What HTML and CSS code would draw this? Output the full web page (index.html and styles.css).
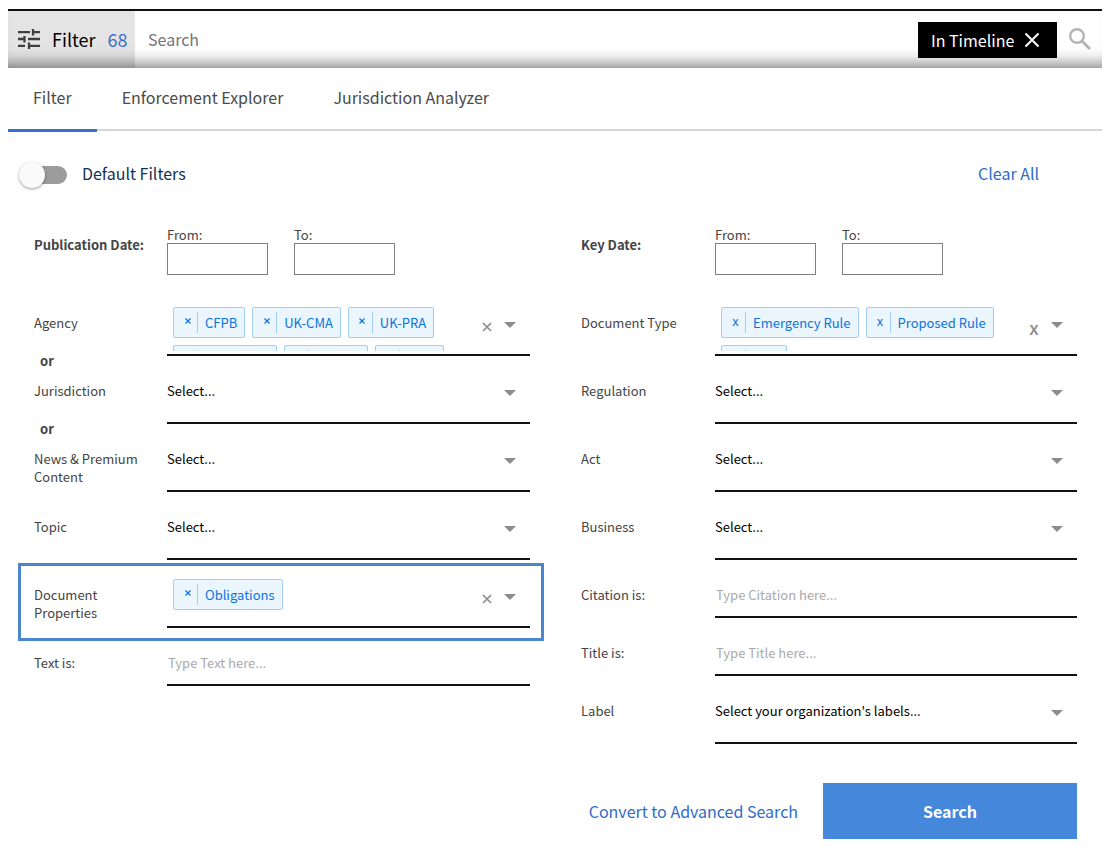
FILE: index.html
```html
<!DOCTYPE html>
<html lang="en">
<head>
<meta charset="utf-8">
<meta name="viewport" content="width=device-width, initial-scale=1">
<title>Filter</title>
<link rel="stylesheet" href="styles.css">
</head>
<body>
<svg class="defs" aria-hidden="true">
  <symbol id="arrow" viewBox="0 0 12 6"><path d="M0 0h12L6 6z" fill="currentColor"/></symbol>
  <symbol id="cross" viewBox="0 0 10 10"><path d="M1 1l8 8M9 1L1 9" fill="none" stroke="currentColor" stroke-width="1.700"/></symbol>
  <symbol id="small-cross" viewBox="0 0 6 6"><path d="M.5 .5l5 5M5.500 .5l-5 5" fill="none" stroke="currentColor" stroke-width="1.200"/></symbol>
</svg>
<header class="topbar">
  <button class="filter-toggle" type="button">
    <svg class="tune" viewBox="0 0 22 20" aria-hidden="true"><path d="M0 3.200h12M15 3.200h7M15 0v6.500M0 10h7M6.500 7v6.500M10 10h12M0 16.800h7M11 16.800h11M11 13.500V20" fill="none" stroke="#3f3f3f" stroke-width="2.300"/></svg>
    <span>Filter</span><span class="count">68</span>
  </button>
  <input class="search-input" type="search" placeholder="Search" aria-label="Search">
  <button class="scope" type="button">In Timeline
    <svg class="scope-x" viewBox="0 0 16 16" aria-hidden="true"><path d="M1.500 1.500l13 13M14.500 1.500l-13 13" fill="none" stroke="#fff" stroke-width="2"/></svg>
  </button>
  <button class="magnifier" type="button" aria-label="Run search">
    <svg viewBox="0 0 22 22" aria-hidden="true"><circle cx="8" cy="8" r="6.800" fill="none" stroke="#b5b5b5" stroke-width="2.400"/><path d="M13 13l8 8" stroke="#b5b5b5" stroke-width="3"/></svg>
  </button>
</header>
<nav class="tabs">
  <a class="tab active" href="#filter">Filter</a>
  <a class="tab" href="#enforcement">Enforcement Explorer</a>
  <a class="tab" href="#jurisdiction">Jurisdiction Analyzer</a>
</nav>
<main class="panel">
  <div class="tools">
    <label class="switch"><input type="checkbox"><span class="track"></span>Default Filters</label>
    <button class="link" type="button">Clear All</button>
  </div>
  <form class="columns">
    <div class="column">
      <div class="dates" role="group" aria-labelledby="publication">
        <span class="date-title" id="publication">Publication Date:</span>
        <label class="date">From:<input type="text"></label>
        <label class="date">To:<input type="text"></label>
      </div>
      <div class="row">
        <span class="name">Agency</span>
        <div class="control multi">
          <div class="chips">
            <span class="chip"><button type="button" aria-label="Remove CFPB"><svg><use href="#small-cross"/></svg></button><span>CFPB</span></span>
            <span class="chip"><button type="button" aria-label="Remove UK-CMA"><svg><use href="#small-cross"/></svg></button><span>UK-CMA</span></span>
            <span class="chip"><button type="button" aria-label="Remove UK-PRA"><svg><use href="#small-cross"/></svg></button><span>UK-PRA</span></span>
            <span class="chip wide"><i></i></span>
            <span class="chip mid"><i></i></span>
            <span class="chip narrow"><i></i></span>
          </div>
          <button class="clear" type="button" aria-label="Clear agency"><svg><use href="#cross"/></svg></button>
          <button class="open" type="button" aria-label="Open agency"><svg><use href="#arrow"/></svg></button>
        </div>
      </div>
      <div class="row">
        <div class="name either"><b>or</b><label for="jurisdiction">Jurisdiction</label></div>
        <div class="control pick"><select id="jurisdiction"><option>Select...</option></select><svg><use href="#arrow"/></svg></div>
      </div>
      <div class="row">
        <div class="name either"><b>or</b><label for="news">News &amp; Premium Content</label></div>
        <div class="control pick"><select id="news"><option>Select...</option></select><svg><use href="#arrow"/></svg></div>
      </div>
      <div class="row">
        <label class="name" for="topic">Topic</label>
        <div class="control pick"><select id="topic"><option>Select...</option></select><svg><use href="#arrow"/></svg></div>
      </div>
      <div class="row marked">
        <span class="name">Document<br>Properties</span>
        <div class="control multi">
          <div class="chips">
            <span class="chip"><button type="button" aria-label="Remove Obligations"><svg><use href="#small-cross"/></svg></button><span>Obligations</span></span>
          </div>
          <button class="clear" type="button" aria-label="Clear document properties"><svg><use href="#cross"/></svg></button>
          <button class="open" type="button" aria-label="Open document properties"><svg><use href="#arrow"/></svg></button>
        </div>
      </div>
      <div class="row short">
        <label class="name" for="text">Text is:</label>
        <input class="control typed" id="text" type="text" placeholder="Type Text here...">
      </div>
    </div>
    <div class="column">
      <div class="dates" role="group" aria-labelledby="key">
        <span class="date-title" id="key">Key Date:</span>
        <label class="date">From:<input type="text"></label>
        <label class="date">To:<input type="text"></label>
      </div>
      <div class="row">
        <span class="name">Document Type</span>
        <div class="control multi">
          <div class="chips">
            <span class="chip"><button type="button">x</button><span>Emergency Rule</span></span>
            <span class="chip"><button type="button">x</button><span>Proposed Rule</span></span>
            <span class="chip slim"><i></i></span>
          </div>
          <button class="clear letter" type="button">x</button>
          <button class="open" type="button" aria-label="Open document type"><svg><use href="#arrow"/></svg></button>
        </div>
      </div>
      <div class="row">
        <label class="name" for="regulation">Regulation</label>
        <div class="control pick"><select id="regulation"><option>Select...</option></select><svg><use href="#arrow"/></svg></div>
      </div>
      <div class="row">
        <label class="name" for="act">Act</label>
        <div class="control pick"><select id="act"><option>Select...</option></select><svg><use href="#arrow"/></svg></div>
      </div>
      <div class="row">
        <label class="name" for="business">Business</label>
        <div class="control pick"><select id="business"><option>Select...</option></select><svg><use href="#arrow"/></svg></div>
      </div>
      <div class="row short">
        <label class="name" for="citation">Citation is:</label>
        <input class="control typed" id="citation" type="text" placeholder="Type Citation here...">
      </div>
      <div class="row short">
        <label class="name" for="title">Title is:</label>
        <input class="control typed" id="title" type="text" placeholder="Type Title here...">
      </div>
      <div class="row">
        <label class="name" for="label">Label</label>
        <div class="control pick"><select id="label"><option>Select your organization's labels...</option></select><svg><use href="#arrow"/></svg></div>
      </div>
    </div>
  </form>
  <div class="actions">
    <button class="link" type="button">Convert to Advanced Search</button>
    <button class="submit" type="button">Search</button>
  </div>
</main>
</body>
</html>
```
FILE: styles.css
```css
* { box-sizing: border-box; }
body {
  margin: 9px 8px 0;
  background: #fff;
  color: #444;
  font: 13px/18px "Noto Sans CJK SC", "Noto Sans", sans-serif;
}
button, input, select { font: inherit; color: inherit; }
button { padding: 0; border: 0; background: none; cursor: pointer; }
svg { display: block; }
.defs { display: none; }

.topbar {
  position: relative;
  display: flex;
  align-items: stretch;
  height: 59px;
  border-top: 2px solid #111;
}
.topbar::after {
  content: "";
  position: absolute;
  inset: 0;
  box-shadow: inset 0 -18px 16px -14px rgba(0, 0, 0, .5);
  pointer-events: none;
}
.filter-toggle {
  display: flex;
  align-items: center;
  gap: 12px;
  width: 127px;
  padding: 0 0 2px 10px;
  background: #e5e4e4;
  color: #000;
  font-size: 18px;
  line-height: 24px;
}
.tune { width: 22px; height: 20px; }
.count { color: #3a6fd0; }
.search-input {
  flex: 1;
  min-width: 0;
  padding: 0 13px 2px;
  border: 0;
  background: none;
  font-size: 16px;
}
.search-input::placeholder { color: #757575; }
.scope {
  position: relative;
  z-index: 1;
  display: flex;
  align-items: center;
  justify-content: space-between;
  width: 139px;
  height: 36px;
  margin-top: 11px;
  padding: 0 17px 0 13px;
  background: #000;
  color: #fff;
  font-size: 16px;
}
.scope-x { width: 16px; height: 16px; }
.magnifier { width: 45px; padding: 0 0 2px 12px; }
.magnifier svg { width: 22px; height: 22px; }

.tabs { display: flex; height: 63px; border-bottom: 2px solid #d6d6d6; }
.tab {
  height: 64px;
  padding: 17px 25px 0;
  color: #4a4a4a;
  font-size: 16px;
  line-height: 24px;
  text-decoration: none;
}
.tab.active { border-bottom: 3px solid #3a6fd0; }

.panel { padding: 0 25px 0 26px; }
.tools { display: flex; justify-content: space-between; align-items: center; height: 96px; padding: 0 38px 13px 0; font-size: 16px; line-height: 24px; }
.link { color: #2f6bc9; font-size: 16px; line-height: 24px; }
.switch { display: flex; align-items: center; gap: 15px; color: #152f52; }
.switch input { position: absolute; opacity: 0; }
.track { position: relative; width: 33px; height: 18px; margin-top: 4px; border-radius: 9px; background: #9b9b9b; }
.track::before {
  content: "";
  position: absolute;
  left: -15px;
  top: -4px;
  width: 26px;
  height: 26px;
  border-radius: 50%;
  background: #fafafa;
  box-shadow: 0 1px 3px rgba(0, 0, 0, .4);
}

.columns { display: grid; grid-template-columns: 1fr 1fr; gap: 51px; }
.dates { display: flex; gap: 26px; height: 61px; }
.date-title { width: 107px; padding-top: 9px; font-weight: 700; white-space: nowrap; }
.date { width: 101px; line-height: 16px; }
.date input { display: block; width: 100%; height: 32px; border: 1px solid #808080; background: #fff; }

.row { display: grid; grid-template-columns: 133px 1fr; height: 68px; }
.column + .column .row { grid-template-columns: 134px 1fr; }
.column + .column .date-title { width: 108px; }
.short { height: 58px; }
.name { padding: 26px 16px 0 0; }
.either { padding: 0 16px 0 0; }
.either b { display: block; padding-left: 6px; line-height: 10px; margin-bottom: 16px; }
.either label { display: block; }
.control { min-width: 0; border-bottom: 2px solid #111; }
.pick { display: grid; color: #000; }
.pick select, .pick svg { grid-area: 1 / 1; }
.pick select {
  width: 100%;
  padding: 26px 0 22px;
  border: 0;
  background: none;
  appearance: none;
  line-height: 18px;
}
.pick svg { justify-self: end; width: 12px; height: 6px; margin: 34px 14px 0; color: #8c8c8c; pointer-events: none; }
.typed { width: 100%; padding: 26px 1px 12px; border-width: 0 0 2px; background: none; line-height: 18px; }
.typed::placeholder { color: #a9a9a9; }

.multi { display: flex; }
.chips {
  flex: 1;
  display: flex;
  flex-wrap: wrap;
  align-content: flex-start;
  gap: 7px;
  height: 44px;
  margin-top: 19px;
  padding-left: 6px;
  overflow: hidden;
}
.chip {
  display: flex;
  height: 31px;
  padding: 4px 0;
  border: 1px solid #a3cdf3;
  border-radius: 2px;
  background: #ebf5fd;
  color: #0a74dc;
}
.chip button { width: 24px; padding: 0 0 4px 4px; border-right: 1px solid #a3cdf3; line-height: 16px; }
.chip button svg { width: 6px; height: 6px; margin: 0 auto; }
.chip > span { padding: 0 7px; line-height: 21px; }
.chip i { width: 24px; border-right: 1px solid #a3cdf3; }
.wide { width: 104px; }
.mid { width: 84px; }
.narrow { width: 69px; }
.slim { width: 66px; }
.clear { width: 10px; height: 10px; margin: 34px 12px 0 0; color: #8c8c8c; }
.clear svg { width: 10px; height: 10px; }
.letter { font-size: 18px; font-weight: 500; line-height: 10px; }
.open { width: 12px; height: 6px; margin: 34px 14px 0 0; color: #8c8c8c; }
.open svg { width: 12px; height: 6px; }

.marked { position: relative; }
.marked::after {
  content: "";
  position: absolute;
  inset: 3px -14px -13px -16px;
  border: 3px solid #4a86cd;
  pointer-events: none;
}

.actions { display: flex; justify-content: flex-end; align-items: center; gap: 25px; margin-top: 39px; }
.submit { width: 254px; height: 56px; background: #4587db; color: #fff; font-size: 16px; font-weight: 700; }
```
